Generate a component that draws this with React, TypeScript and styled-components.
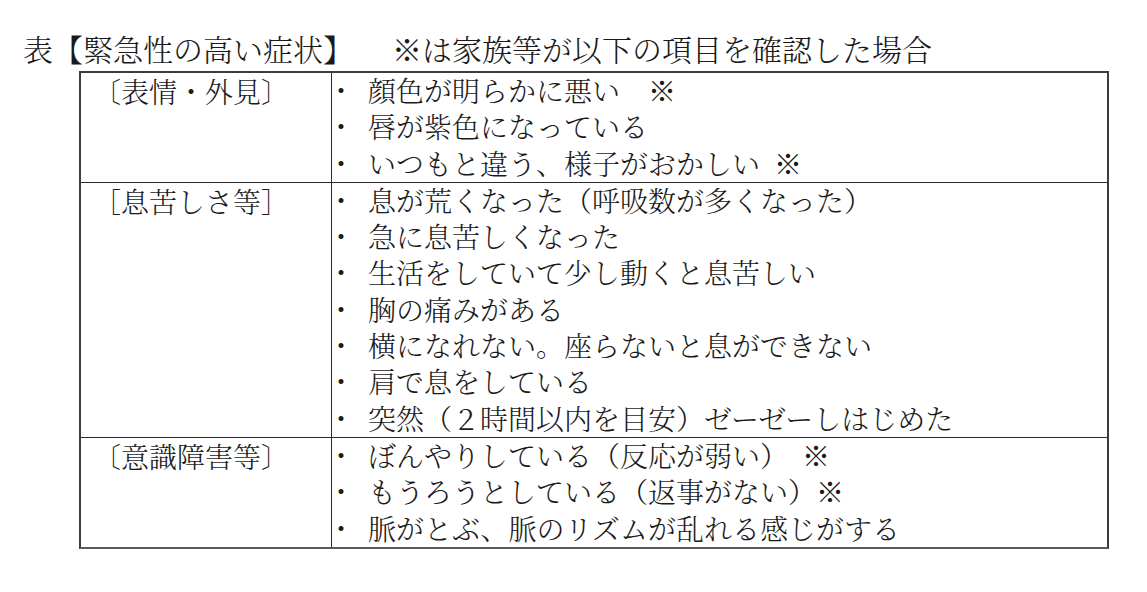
import React from "react";
import styled, { createGlobalStyle } from "styled-components";

const GlobalStyle = createGlobalStyle`
  html, body {
    margin: 0;
    padding: 0;
    background: #ffffff;
  }
  body {
    font-family: "Noto Serif CJK JP", "Noto Sans CJK JP", "Noto Sans", serif;
    font-weight: 300;
    color: #1a1a1a;
  }
`;

const Page = styled.div`
  width: 1147px;
  height: 592px;
  padding-top: 30px;
  box-sizing: border-box;
  background: #fff;
`;

const Title = styled.h1`
  margin: 0 0 5px 0;
  padding-left: 23px;
  font-size: 30px;
  line-height: 36px;
  font-weight: 300;
  white-space: nowrap;
`;

const Note = styled.span`
  margin-left: 39px;
`;

const Table = styled.div`
  margin-left: 79px;
  width: 1030px;
  box-sizing: border-box;
  border: 2px solid #3c3c3c;
  border-bottom: 2px solid #5a5a5a;
`;

const Row = styled.div<{ $first?: boolean }>`
  display: grid;
  grid-template-columns: 251px 1fr;
  border-top: ${(p) => (p.$first ? "none" : "1px solid #2a2a2a")};
`;

const Label = styled.div`
  border-right: 1px solid #2a2a2a;
  padding-left: 12px;
  font-size: 28px;
  line-height: 36.3px;
  white-space: nowrap;
`;

const Items = styled.ul`
  margin: -1px 0 1px 0;
  padding: 0;
  list-style: none;
`;

const Item = styled.li`
  font-size: 28px;
  line-height: 36.3px;
  white-space: nowrap;
`;

const Bullet = styled.span`
  display: inline-block;
  width: 36px;
  margin-left: -5px;
  padding-right: 5px;
  box-sizing: content-box;
`;

const Spacer = styled.span`
  display: inline-block;
  width: 14px;
`;

type Entry = { label: string; items: React.ReactNode[] };

const data: Entry[] = [
  {
    label: "〔表情・外見〕",
    items: [
      "顔色が明らかに悪い　※",
      "唇が紫色になっている",
      <>
        いつもと違う、様子がおかしい<Spacer />※
      </>,
    ],
  },
  {
    label: "［息苦しさ等］",
    items: [
      "息が荒くなった（呼吸数が多くなった）",
      "急に息苦しくなった",
      "生活をしていて少し動くと息苦しい",
      "胸の痛みがある",
      "横になれない。座らないと息ができない",
      "肩で息をしている",
      "突然（２時間以内を目安）ゼーゼーしはじめた",
    ],
  },
  {
    label: "〔意識障害等〕",
    items: [
      "ぼんやりしている（反応が弱い）　※",
      "もうろうとしている（返事がない）※",
      "脈がとぶ、脈のリズムが乱れる感じがする",
    ],
  },
];

export default function App() {
  return (
    <>
      <GlobalStyle />
      <Page>
        <Title>
          表【緊急性の高い症状】<Note>※は家族等が以下の項目を確認した場合</Note>
        </Title>
        <Table>
          {data.map((row, i) => (
            <Row key={i} $first={i === 0}>
              <Label>{row.label}</Label>
              <Items>
                {row.items.map((it, j) => (
                  <Item key={j}>
                    <Bullet>・</Bullet>
                    {it}
                  </Item>
                ))}
              </Items>
            </Row>
          ))}
        </Table>
      </Page>
    </>
  );
}
